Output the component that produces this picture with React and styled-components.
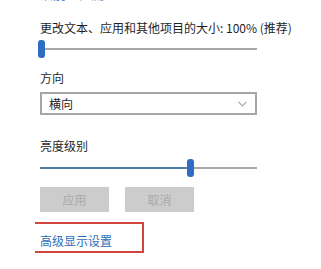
import React from "react";
import styled, { createGlobalStyle } from "styled-components";

const Global = createGlobalStyle`
  html, body { margin: 0; padding: 0; background: #fff; }
  body { font-family: "Noto Sans CJK SC", "Noto Sans", sans-serif; color: #1f1f1f; }
`;

const Page = styled.div`
  width: 321px;
  height: 269px;
  overflow: hidden;
  padding-left: 40px;
  box-sizing: border-box;
  display: flex;
  flex-direction: column;
`;

const TopLinks = styled.div`
  display: flex;
  gap: 12px;
  margin-top: -14px;
  font-size: 13px;
  line-height: 16px;
  color: #4a8fd0;
`;

const Label = styled.div`
  font-size: 12px;
  line-height: 16px;
  white-space: nowrap;
  margin-top: ${(p) => p.$mt}px;
`;

const Slider = styled.div`
  position: relative;
  width: 217px;
  height: 18px;
  margin-top: ${(p) => p.$mt}px;
  display: flex;
  align-items: center;
`;

const Track = styled.div`
  flex: 1;
  height: 2px;
  background: linear-gradient(
    to right,
    #4d7fa3 0,
    #4d7fa3 ${(p) => p.$fill}px,
    #a8a8a8 ${(p) => p.$fill}px,
    #a8a8a8 100%
  );
`;

const Thumb = styled.div`
  position: absolute;
  top: 0;
  width: 7px;
  height: 18px;
  border-radius: 3px;
  background: #2f6dc2;
`;

const Select = styled.div`
  margin-top: 6px;
  width: 217px;
  height: 23px;
  box-sizing: border-box;
  border: 2px solid #a6a6a6;
  display: flex;
  align-items: center;
  justify-content: space-between;
  padding: 0 8px 0 7px;
  font-size: 12px;
`;

const Buttons = styled.div`
  display: flex;
  gap: 16px;
  margin-top: 10px;
`;

const Button = styled.div`
  width: 69px;
  height: 25px;
  background: #cccccc;
  color: #a9a9a9;
  font-size: 12px;
  display: flex;
  align-items: center;
  justify-content: center;
`;

const Highlight = styled.div`
  margin-top: 10px;
  margin-left: -5px;
  width: 109px;
  height: 31px;
  box-sizing: border-box;
  border: 2px solid #d2453f;
  border-left: none;
  padding: 9px 0 0 5px;
  display: flex;
  align-items: flex-start;
`;

const Link = styled.span`
  display: block;
  font-size: 12px;
  line-height: 16px;
  color: #2a70b8;
`;

export default function App() {
  return (
    <>
      <Global />
      <Page>
        <TopLinks>
          <span>识别</span>
          <span>检测</span>
        </TopLinks>
        <Label $mt={18}>更改文本、应用和其他项目的大小: 100% (推荐)</Label>
        <Slider $mt={4}>
          <Track $fill={0} />
          <Thumb style={{ left: -2 }} />
        </Slider>
        <Label $mt={12}>方向</Label>
        <Select>
          <span>横向</span>
          <svg width="9" height="6" viewBox="0 0 9 6">
            <path d="M0.5 0.8 L4.5 4.8 L8.5 0.8" fill="none" stroke="#a8a8a8" strokeWidth="1.2" />
          </svg>
        </Select>
        <Label $mt={23}>亮度级别</Label>
        <Slider $mt={5}>
          <Track $fill={148} />
          <Thumb style={{ left: 147 }} />
        </Slider>
        <Buttons>
          <Button>应用</Button>
          <Button>取消</Button>
        </Buttons>
        <Highlight>
          <Link>高级显示设置</Link>
        </Highlight>
      </Page>
    </>
  );
}
